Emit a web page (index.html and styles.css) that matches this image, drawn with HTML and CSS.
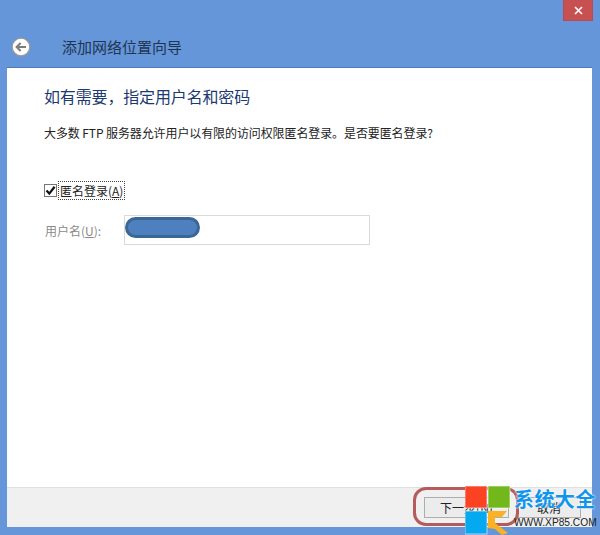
FILE: index.html
```html
<!DOCTYPE html>
<html lang="zh">
<head>
<meta charset="utf-8">
<title>添加网络位置向导</title>
<link rel="stylesheet" href="styles.css">
</head>
<body>
<div class="window">
  <div class="titlebar">
    <div class="close"><svg width="9" height="9" viewBox="0 0 9 9"><path d="M1 1 8 8M8 1 1 8" stroke="#fff" stroke-width="1.6"/></svg></div>
  </div>
  <div class="header">
    <svg class="back" width="20" height="20" viewBox="0 0 20 20"><circle cx="10" cy="10" r="8.8" fill="#fff" stroke="#9a9a9a" stroke-width="1.2"/><path d="M15 10H6M9.6 6 5.6 10l4 4" fill="none" stroke="#7d7d7d" stroke-width="2"/></svg>
    <span class="title">添加网络位置向导</span>
  </div>
  <div class="panel">
    <main class="content">
      <h1 class="heading">如有需要，指定用户名和密码</h1>
      <p class="desc">大多数 FTP 服务器允许用户以有限的访问权限匿名登录。是否要匿名登录?</p>
      <div class="check-row">
        <span class="checkbox"><svg width="11" height="11" viewBox="0 0 11 11"><path d="M1.5 5.5 4.3 8.6 9.6 1.8" fill="none" stroke="#111" stroke-width="2.2"/></svg></span>
        <span class="check-label">匿名登录(<u>A</u>)</span>
      </div>
      <div class="user-row">
        <span class="user-label">用户名(<u>U</u>):</span>
        <div class="input"><span class="redact"></span></div>
      </div>
    </main>
    <footer class="footer">
      <button class="btn btn-next">下一步(N)</button>
      <button class="btn btn-cancel">取消</button>
    </footer>
  </div>
</div>
<div class="highlight"></div>
<div class="logo">
  <svg class="logo-mark" width="46" height="49" viewBox="0 0 46 49">
    <g stroke="#fff" stroke-opacity="0.6" stroke-width="1">
      <rect x="0" y="0" width="22" height="22" fill="#fb4222"/>
      <rect x="23" y="0" width="22" height="22" fill="#72b71c"/>
      <rect x="0" y="25" width="22" height="23" fill="#04a9f0"/>
    </g>
    <path d="M23 25H42L37 31H30V37L43 47 37 49 30 43 23 42Z" fill="#fbb124"/>
  </svg>
  <div class="logo-text">
    <span class="logo-cn">系统大全</span>
    <span class="logo-url">WWW.XP85.COM</span>
  </div>
</div>
</body>
</html>
```
FILE: styles.css
```css
* { box-sizing: border-box; }
html, body { margin: 0; height: 535px; overflow: hidden; }
body { background: #6496d9; font-family: "Noto Sans CJK SC", "Liberation Sans", sans-serif; position: relative; }
.window { display: flex; flex-direction: column; height: 535px; padding: 0 8px 8px 7px; }
.titlebar { display: flex; justify-content: flex-end; height: 34px; flex: none; }
.close { width: 30px; height: 21px; margin-right: -1px; margin-left: auto; background: #c75050; display: flex; align-items: center; justify-content: center; border: 1px solid #b64a56; border-top: 0; }
.header { display: flex; align-items: center; height: 33px; flex: none; margin-left: 4px; padding-bottom: 7px; }
.back { flex: none; }
.title { margin-left: 31px; font-size: 15px; color: #1f3450; line-height: 20px; }
.panel { flex: 1; display: flex; flex-direction: column; background: #fff; border-top: 1px solid #4f7cb5; }
.content { flex: 1; padding: 16px 0 0 37px; }
.heading { margin: 0; font-size: 16px; font-weight: 400; letter-spacing: -0.15px; line-height: 24px; color: #1c3a72; }
.desc { margin: 16px 0 0; font-size: 12px; letter-spacing: -0.1px; line-height: 18px; color: #222; }
.check-row { display: flex; align-items: center; margin-top: 38px; height: 20px; }
.checkbox { width: 13px; height: 13px; border: 1px solid #777; background: #fff; display: flex; align-items: center; justify-content: center; flex: none; }
.check-label { margin-left: 1px; padding: 0 1px; height: 19px; line-height: 17px; font-size: 12px; color: #222; border: 1px dotted #444; }
.user-row { display: flex; align-items: center; margin-top: 15px; }
.user-label { width: 80px; padding-left: 1px; font-size: 12px; color: #8a8a8a; }
.input { width: 246px; height: 30px; border: 1px solid #d9d9d9; background: #fff; }
.redact { display: block; width: 75px; height: 21px; margin-top: 1px; background: #4e7fbe; border: 3px solid #3b6795; border-radius: 11px; }
.footer { flex: none; height: 40px; display: flex; align-items: center; justify-content: flex-end; gap: 8px; padding: 0 11px 0 0; background: #f0f0f0; border-top: 1px solid #dfdfdf; }
.btn { height: 21px; padding: 0; font: 12px "Noto Sans CJK SC", sans-serif; color: #222; background: #ececec; border: 1px solid #adadad; }
.btn-next { width: 85px; }
.btn-cancel { width: 64px; }
.highlight { position: absolute; left: 413px; top: 487px; width: 106px; height: 39px; border: 3px solid #b65b5b; border-radius: 13px; }
.logo { position: absolute; left: 465px; top: 486px; display: flex; align-items: flex-start; }
.logo-mark { flex: none; }
.logo-text { display: flex; flex-direction: column; margin-left: 3px; width: 84px; white-space: nowrap; }
.logo-cn { font-size: 20px; font-weight: 700; letter-spacing: 0.4px; line-height: 26px; color: #0f95ec; text-shadow: 0 0 2px #fff, 0 0 2px #fff; }
.logo-url { font: 10.2px "Liberation Sans", sans-serif; line-height: 13px; color: #222; margin-top: 4px; }
```
